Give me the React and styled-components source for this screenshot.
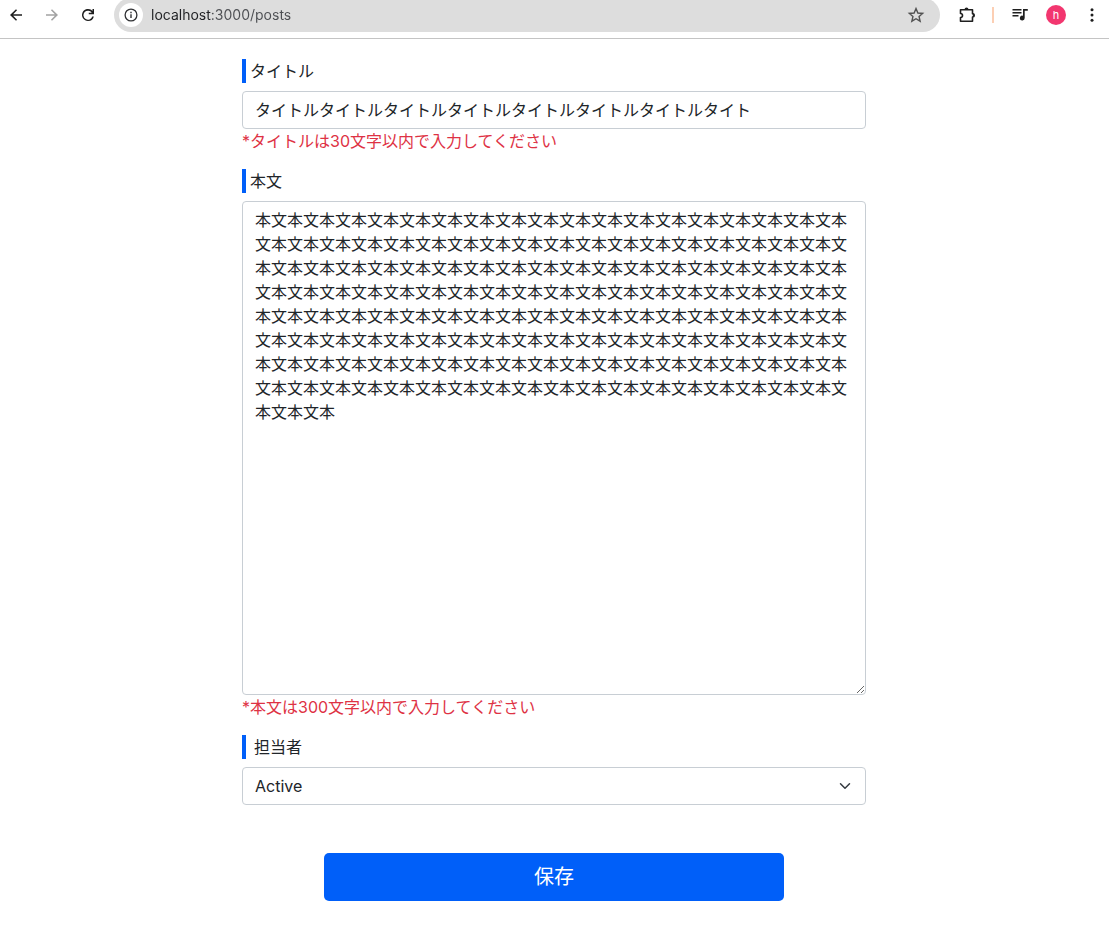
import React, { useState } from "react";
import styled, { createGlobalStyle } from "styled-components";

const GlobalStyle = createGlobalStyle`
  *, *::before, *::after { box-sizing: border-box; }
  body {
    margin: 0;
    background: #fff;
    color: #212529;
    font-family: Inter, "Noto Sans CJK JP", sans-serif;
    font-size: 16px;
    line-height: 24px;
  }
  button, input, textarea, select { font: inherit; color: inherit; margin: 0; }
`;

const Toolbar = styled.header`
  overflow: hidden;
  padding-bottom: 6px;
  border-bottom: 1px solid #c4c4c4;
`;

const ToolbarRow = styled.div`
  display: flex;
  align-items: center;
  justify-content: space-between;
  height: 34px;
  margin-top: -2px;
  padding: 0 5px 0 4px;
`;

const ToolGroup = styled.div`
  display: flex;
  align-items: center;
  gap: ${(p) => p.$gap}px;
`;

const IconButton = styled.button`
  display: grid;
  place-items: center;
  flex: none;
  width: 24px;
  height: 24px;
  padding: 0;
  border: 0;
  border-radius: 12px;
  background: ${(p) => p.$fill || "transparent"};
  color: ${(p) => p.$tone || "#1f1f1f"};
`;

const AddressBar = styled.div`
  display: flex;
  align-items: center;
  flex: 1;
  gap: 8px;
  height: 34px;
  margin: 0 15px 0 14px;
  padding: 0 12px 0 5px;
  border-radius: 17px;
  background: #dddddd;
`;

const AddressInput = styled.input`
  flex: 1;
  min-width: 0;
  height: 24px;
  padding: 0;
  border: 0;
  outline: 0;
  font-size: 14px;
  color: #202124;
  background: linear-gradient(90deg, #202124 60px, #4c4e52 60px);
  background-clip: text;
  -webkit-text-fill-color: transparent;
`;

const Divider = styled.span`
  width: 2px;
  height: 16px;
  background: #fccfb4;
`;

const Avatar = styled.button`
  display: grid;
  place-items: center;
  width: 20px;
  height: 20px;
  padding: 0;
  border: 0;
  border-radius: 10px;
  background: #f2366f;
  color: #fff;
  font-size: 11px;
  line-height: 20px;
`;

const Page = styled.main`
  max-width: 961px;
  margin: 0 auto;
  padding: 20px 13px 41px 12px;
`;

const Form = styled.form`
  display: flex;
  flex-direction: column;
  gap: 16px;
  width: calc(100% * 2 / 3);
  margin: 0 auto;
`;

const Field = styled.div`
  display: flex;
  flex-direction: column;
`;

const Label = styled.label`
  margin-bottom: 8px;
  padding-left: ${(p) => p.$indent || 4}px;
  border-left: 4px solid #005ff9;
`;

const Control = styled.input`
  display: block;
  width: 100%;
  padding: 6px 12px;
  border: 1px solid #c8ced4;
  border-radius: 4px;
  background: #fff;
  outline: 0;
`;

const TextInput = styled(Control)`
  height: 38px;
  padding: 5px 12px 7px;
`;

const TextArea = styled(Control)`
  resize: vertical;
  word-break: break-all;
`;

const SelectBox = styled.div`
  display: grid;
  align-items: center;
  > * { grid-area: 1 / 1; }
  > svg {
    justify-self: end;
    margin-right: 13px;
    pointer-events: none;
  }
`;

const Select = styled(Control)`
  height: 38px;
  appearance: none;
`;

const ErrorText = styled.p`
  margin: 0;
  color: #de3244;
`;

const SubmitButton = styled.button`
  align-self: center;
  width: calc(75% - 8px);
  height: 48px;
  margin-top: 32px;
  border: 0;
  border-radius: 5px;
  background: #005ff9;
  color: #fff;
  font-size: 20px;
  line-height: 30px;
`;

const Icon = ({ size = 18, box = "0 0 24 24", children }) => (
  <svg width={size} height={size} viewBox={box} fill="currentColor" aria-hidden="true">
    {children}
  </svg>
);

function BrowserToolbar() {
  return (
    <Toolbar>
      <ToolbarRow>
        <ToolGroup $gap={12}>
          <IconButton type="button" aria-label="戻る">
            <Icon><path d="M20 10.9H8.2l5.2-5.2L12 4.2 4 12l8 7.8 1.4-1.5-5.2-5.2H20z" /></Icon>
          </IconButton>
          <IconButton type="button" aria-label="進む" $tone="#a3a3a3">
            <Icon><path d="M4 10.9h11.8l-5.2-5.2L12 4.2l8 7.8-8 7.8-1.4-1.5 5.2-5.2H4z" /></Icon>
          </IconButton>
          <IconButton type="button" aria-label="再読み込み">
            <Icon>
              <path d="M12 20a8 8 0 1 1 5.7-13.6L18 6.7V4h2v7h-7V9h4a6 6 0 1 0 .7 5h2.1A8 8 0 0 1 12 20z" />
            </Icon>
          </IconButton>
        </ToolGroup>
        <AddressBar>
          <IconButton type="button" aria-label="サイト情報" $fill="#fff" $tone="#303134">
            <Icon size={14} box="0 0 14 14">
              <circle cx="7" cy="7" r="5.9" fill="none" stroke="currentColor" strokeWidth="1.3" />
              <path d="M6.3 6.3h1.4v3.8H6.3zM6.3 3.8h1.4v1.4H6.3z" />
            </Icon>
          </IconButton>
          <AddressInput aria-label="アドレス" defaultValue="localhost:3000/posts" spellCheck={false} />
          <IconButton type="button" aria-label="ブックマーク" $tone="#525252">
            <Icon>
              <path d="M12 3.4l2.5 5.9 6.4.6-4.8 4.2 1.4 6.2-5.5-3.3-5.5 3.3 1.4-6.2-4.8-4.2 6.4-.6z" fill="none" stroke="currentColor" strokeWidth="1.9" />
            </Icon>
          </IconButton>
        </AddressBar>
        <ToolGroup $gap={14}>
          <ToolGroup $gap={13}>
            <IconButton type="button" aria-label="拡張機能">
              <Icon size={18} box="0 0 18 18">
                <path d="M2.5 3.7h12v4.1a1.6 1.6 0 0 1 0 3.2v4.3h-12v-3.8a2 2 0 0 0 0-4z" fill="none" stroke="currentColor" strokeWidth="1.6" strokeLinejoin="round" />
                <path d="M6.5 3.5a2 2 0 0 1 4 0zM14.8 7.3a2 2 0 0 1 0 4z" />
              </Icon>
            </IconButton>
            <Divider />
          </ToolGroup>
          <ToolGroup $gap={14}>
            <IconButton type="button" aria-label="メディア">
              <Icon size={18} box="0 0 18 18">
                <path d="M1.5 3h9v1.5h-9zM1.5 6h9v1.5h-9zM1.5 9h6v1.5h-6zM12 3h4.8v1.7h-3.1v7.4a2.4 2.4 0 1 1-1.7-2.3z" />
              </Icon>
            </IconButton>
            <Avatar type="button" aria-label="プロフィール">h</Avatar>
            <IconButton type="button" aria-label="メニュー">
              <Icon size={18} box="0 0 18 18">
                <circle cx="9" cy="3.8" r="1.5" />
                <circle cx="9" cy="9" r="1.5" />
                <circle cx="9" cy="14.2" r="1.5" />
              </Icon>
            </IconButton>
          </ToolGroup>
        </ToolGroup>
      </ToolbarRow>
    </Toolbar>
  );
}

export default function App() {
  const [title, setTitle] = useState("タイトル".repeat(7) + "タイト");
  const [body, setBody] = useState("本文".repeat(150) + "本");

  return (
    <>
      <GlobalStyle />
      <BrowserToolbar />
      <Page>
        <Form onSubmit={(e) => e.preventDefault()}>
          <Field>
            <Label htmlFor="title">タイトル</Label>
            <TextInput id="title" type="text" value={title} onChange={(e) => setTitle(e.target.value)} aria-describedby="title-error" />
            <ErrorText id="title-error">*タイトルは30文字以内で入力してください</ErrorText>
          </Field>
          <Field>
            <Label htmlFor="body">本文</Label>
            <TextArea as="textarea" id="body" rows={20} value={body} onChange={(e) => setBody(e.target.value)} aria-describedby="body-error" spellCheck={false} />
            <ErrorText id="body-error">*本文は300文字以内で入力してください</ErrorText>
          </Field>
          <Field>
            <Label htmlFor="assignee" $indent={8}>担当者</Label>
            <SelectBox>
              <Select as="select" id="assignee" defaultValue="Active">
                <option>Active</option>
              </Select>
              <svg width="16" height="12" viewBox="0 0 16 16" aria-hidden="true">
                <path d="M2 5l6 6 6-6" fill="none" stroke="#343a40" strokeWidth="2" strokeLinecap="round" strokeLinejoin="round" />
              </svg>
            </SelectBox>
          </Field>
          <SubmitButton type="submit">保存</SubmitButton>
        </Form>
      </Page>
    </>
  );
}
